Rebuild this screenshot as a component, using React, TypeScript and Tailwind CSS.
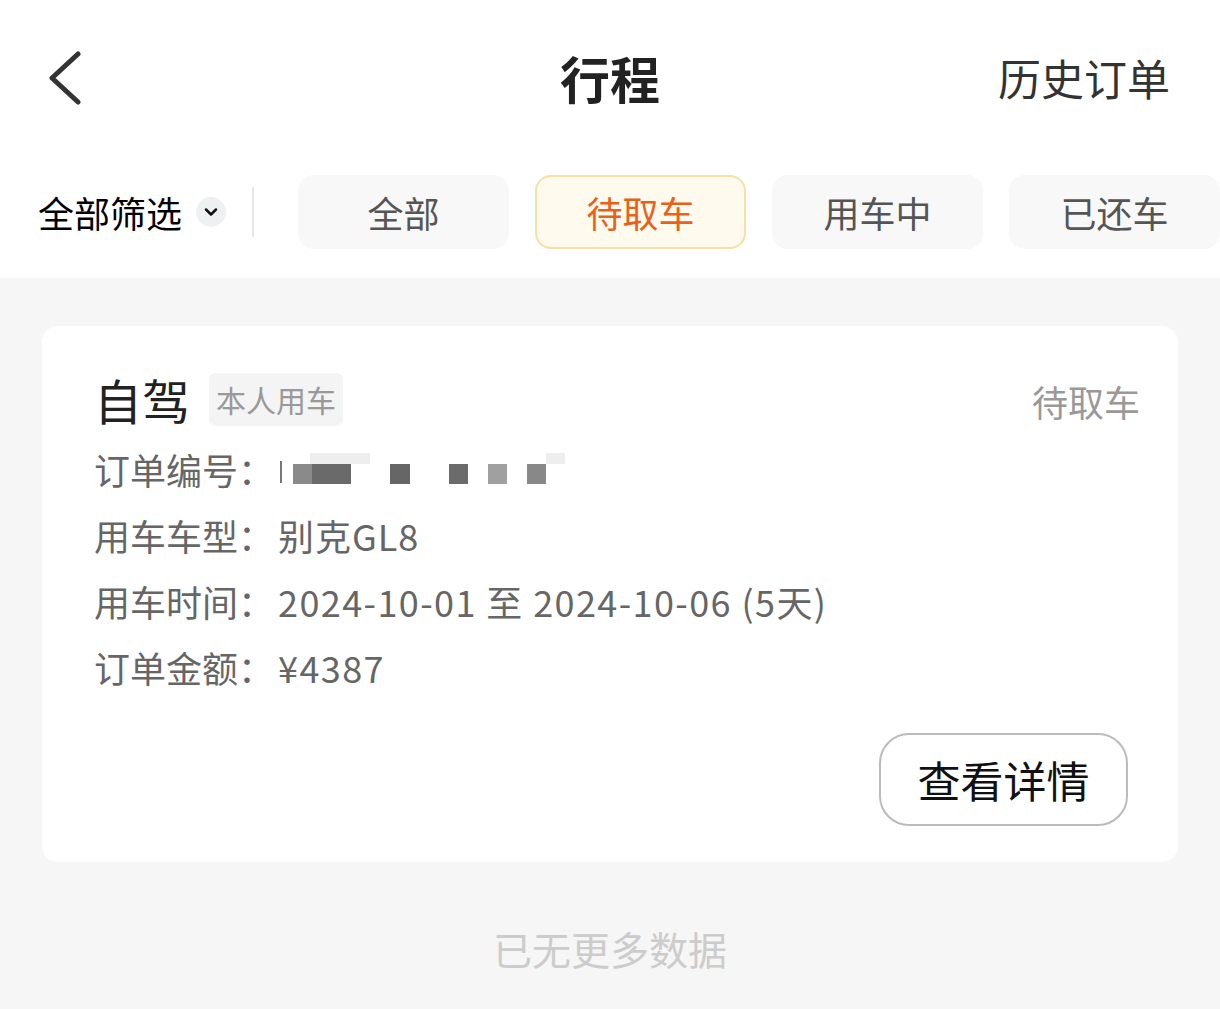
import { ChevronDown } from 'lucide-react';

const tabs = ['全部', '待取车', '用车中', '已还车'];

function Redacted() {
  // pixelated order number
  return (
    <span className="relative inline-block w-[290px] h-[36px] align-middle ml-[4px]">
      <span className="absolute left-[2px] top-[10px] w-[2px] h-[22px] bg-[#777]" />
      <span className="absolute left-[32px] top-[2px] w-[60px] h-[11px] bg-[#eeeeee]" />
      <span className="absolute left-[15px] top-[13px] w-[19px] h-[20px] bg-[#8a8a8a]" />
      <span className="absolute left-[34px] top-[13px] w-[39px] h-[20px] bg-[#6a6a6a]" />
      <span className="absolute left-[112px] top-[13px] w-[20px] h-[20px] bg-[#666666]" />
      <span className="absolute left-[171px] top-[13px] w-[19px] h-[20px] bg-[#6b6b6b]" />
      <span className="absolute left-[210px] top-[13px] w-[19px] h-[20px] bg-[#a0a0a0]" />
      <span className="absolute left-[249px] top-[13px] w-[19px] h-[20px] bg-[#888888]" />
      <span className="absolute left-[268px] top-[2px] w-[19px] h-[11px] bg-[#eeeeee]" />
    </span>
  );
}

export default function App() {
  return (
    <div
      className="w-[1220px] h-[1009px] overflow-hidden bg-[#f6f6f6] flex flex-col"
      style={{ fontFamily: '"Noto Sans CJK SC", "Noto Sans", sans-serif' }}
    >
      {/* Header */}
      <div className="bg-white">
        <div className="h-[155px] flex items-center justify-between pl-[46px] pr-[50px] relative">
          <svg width="40" height="56" viewBox="0 0 40 56" fill="none" className="-mt-[2px]">
            <polyline
              points="32,5 6,29 32,53"
              stroke="#333"
              strokeWidth="5"
              strokeLinecap="round"
              strokeLinejoin="round"
            />
          </svg>
          <div className="absolute left-0 right-0 text-center text-[50px] font-bold text-[#222] pointer-events-none">
            行程
          </div>
          <div className="text-[43px] text-[#333]">历史订单</div>
        </div>

        {/* Filter row */}
        <div className="flex items-center pl-[38px] pt-[20px] pb-[29px]">
          <div className="flex items-center">
            <span className="text-[36px] text-black leading-none">全部筛选</span>
            <span className="ml-[14px] w-[30px] h-[30px] rounded-full bg-[#eef1f2] flex items-center justify-center">
              <ChevronDown className="w-[20px] h-[20px] text-[#111]" strokeWidth={3} />
            </span>
          </div>
          <div className="ml-[26px] w-[2px] h-[50px] bg-[#e6e6e6]" />
          <div className="ml-[44px] flex gap-[26px]">
            {tabs.map((t) =>
              t === '待取车' ? (
                <div
                  key={t}
                  className="w-[211px] h-[74px] shrink-0 rounded-[16px] border-2 border-[#f8dfa6] bg-[#fffaee] flex items-center justify-center text-[36px] text-[#e8611a]"
                >
                  {t}
                </div>
              ) : (
                <div
                  key={t}
                  className="w-[211px] h-[74px] shrink-0 rounded-[16px] bg-[#f8f8f8] flex items-center justify-center text-[36px] text-[#555]"
                >
                  {t}
                </div>
              )
            )}
          </div>
        </div>
      </div>

      {/* Card */}
      <div className="mt-[48px] mx-[42px] bg-white rounded-[16px] h-[536px] pl-[52px] pr-[38px] pt-[44px]">
        <div className="flex items-center justify-between">
          <div className="flex items-center">
            <span className="text-[48px] text-[#222] leading-none">自驾</span>
            <span className="ml-[19px] h-[53px] px-[7px] rounded-[6px] bg-[#f4f4f4] text-[30px] text-[#999] flex items-center">
              本人用车
            </span>
          </div>
          <span className="text-[36px] text-[#999] mt-[4px]">待取车</span>
        </div>

        <div className="mt-[8px] flex flex-col text-[36px] text-[#666] leading-[66px]">
          <div className="flex items-center">
            <span>订单编号：</span>
            <Redacted />
          </div>
          <div>
            用车车型：<span className="ml-[4px] tracking-[1px]">别克GL8</span>
          </div>
          <div>
            用车时间：<span className="ml-[4px] tracking-[1.4px]">2024-10-01 至 2024-10-06 (5天)</span>
          </div>
          <div>
            订单金额：<span className="ml-[4px] tracking-[1.4px]">¥4387</span>
          </div>
        </div>

        <div className="flex justify-end mt-[33px] mr-[12px]">
          <div className="w-[249px] h-[93px] rounded-[30px] border-2 border-[#bbbbbb] flex items-center justify-center text-[43px] text-[#111]">
            查看详情
          </div>
        </div>
      </div>

      <div className="mt-[57px] text-center text-[39px] text-[#cccccc]">已无更多数据</div>
    </div>
  );
}
